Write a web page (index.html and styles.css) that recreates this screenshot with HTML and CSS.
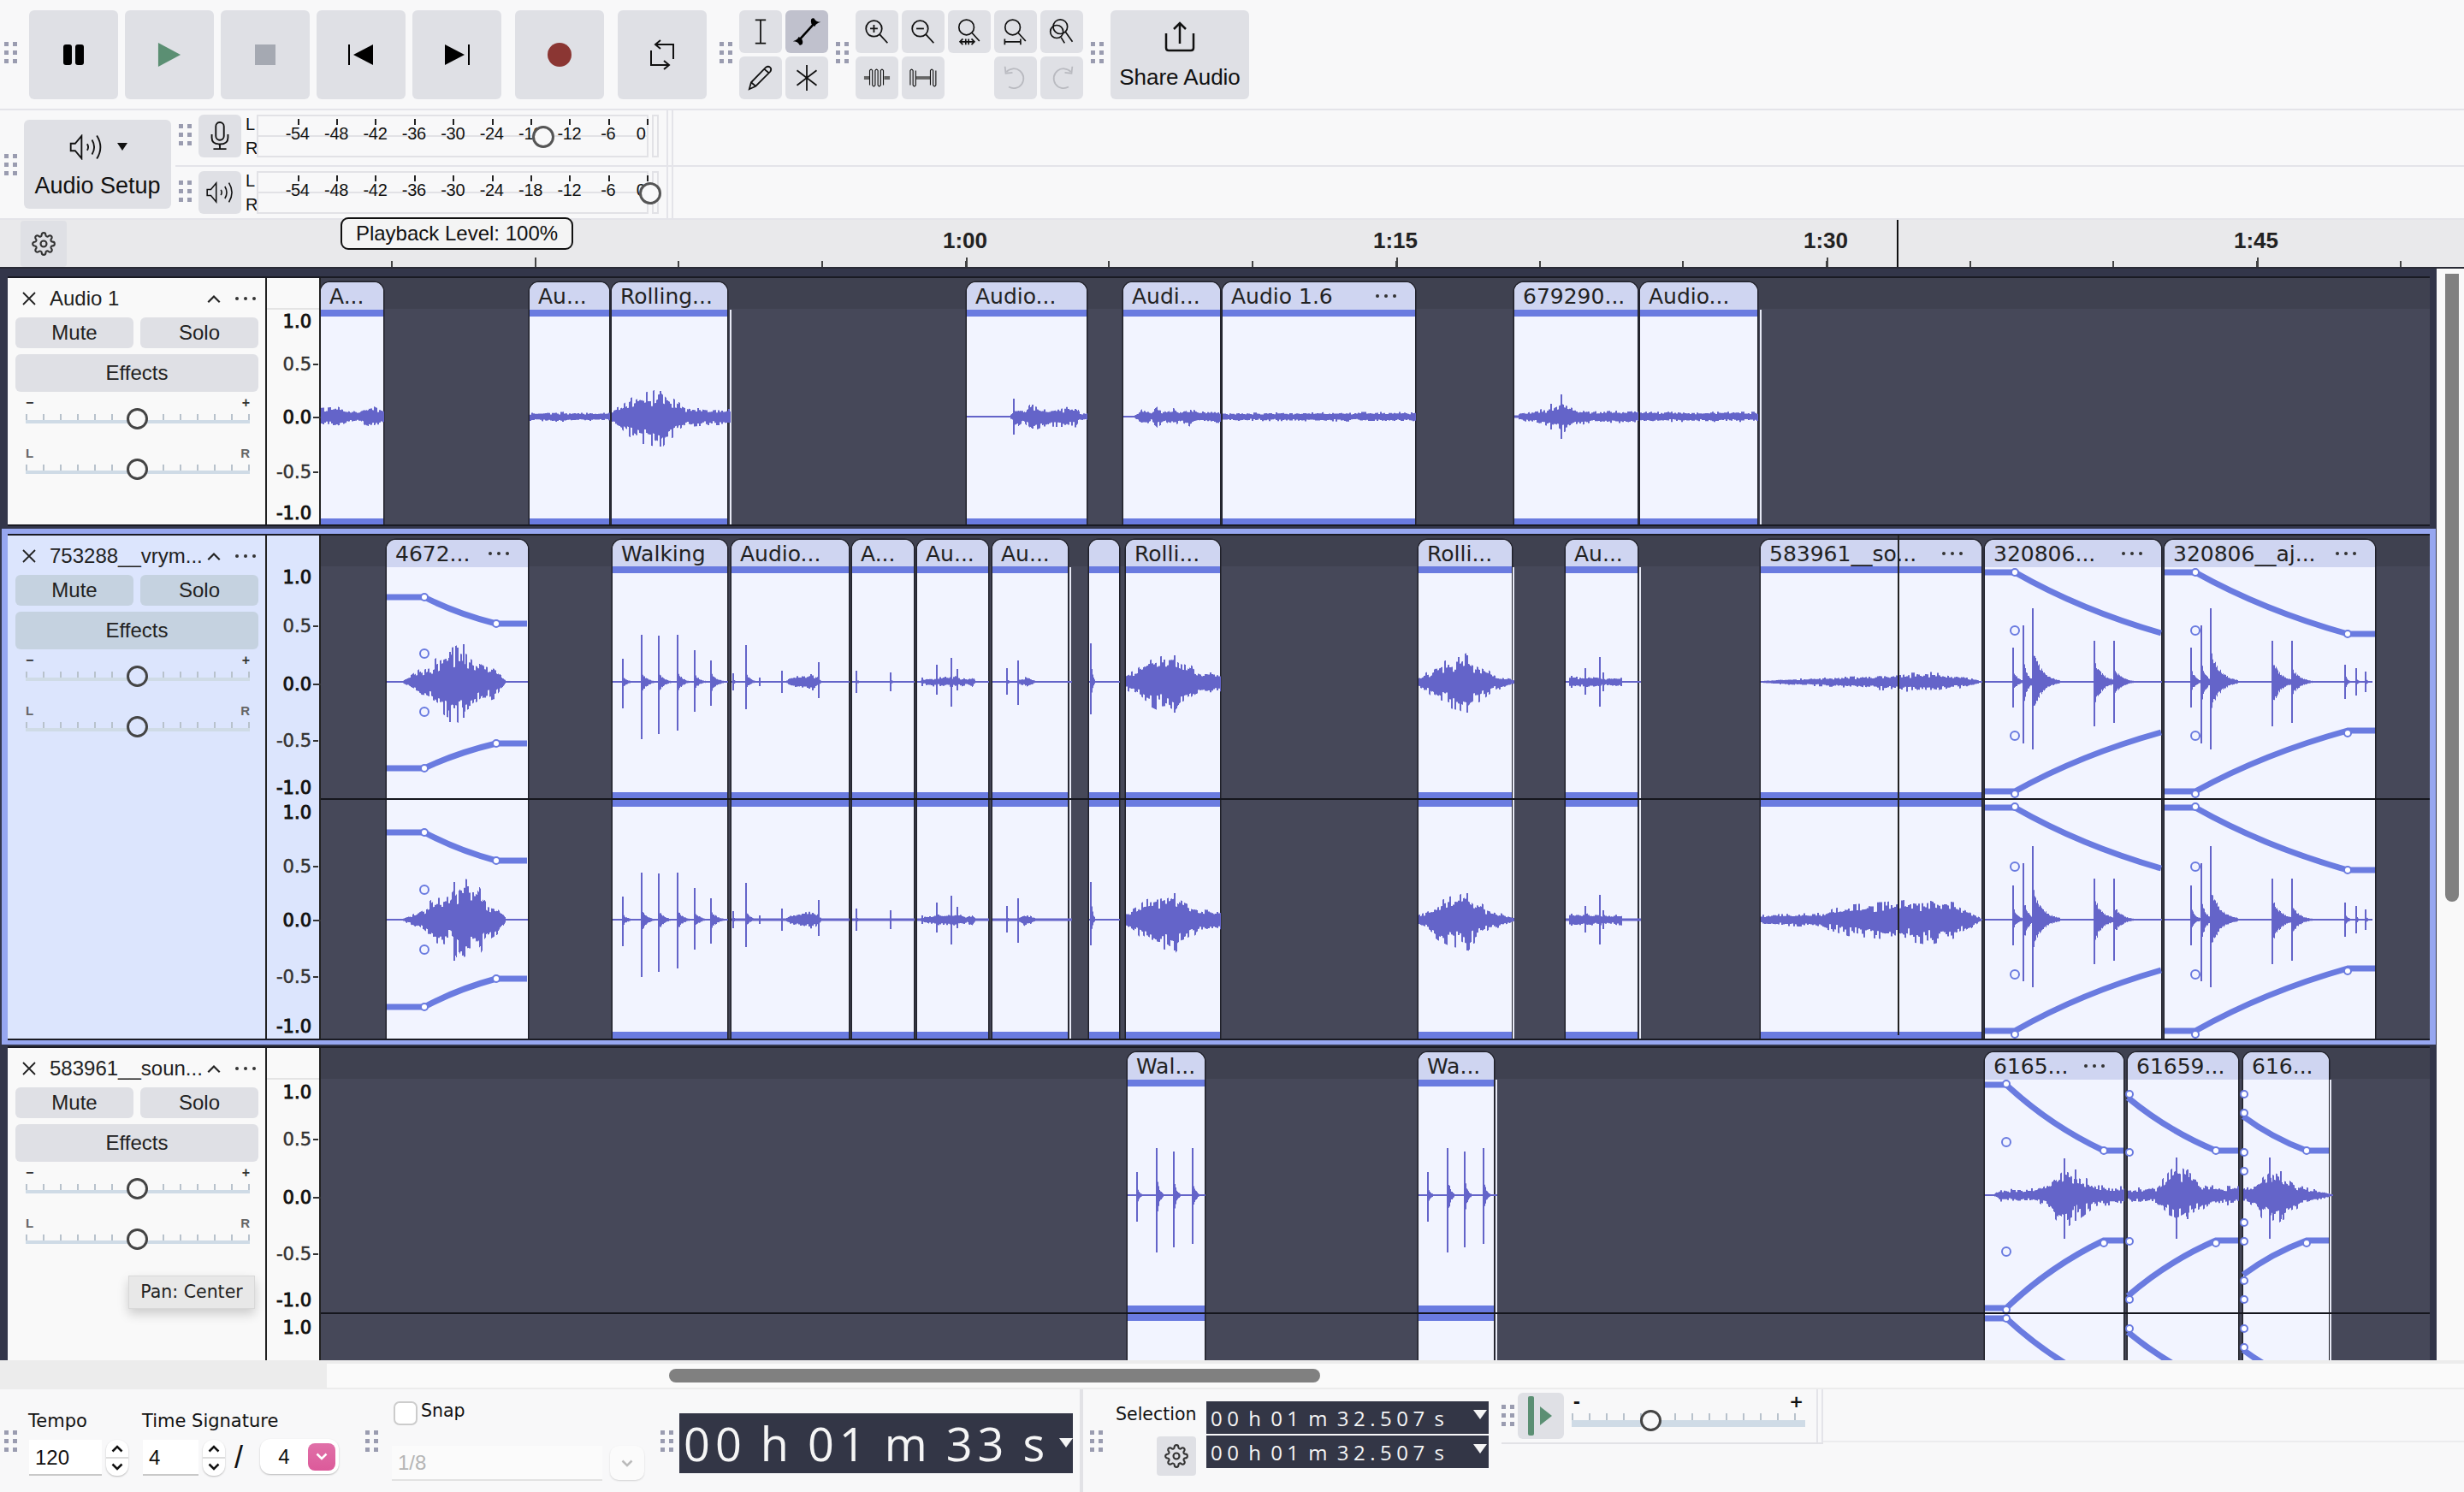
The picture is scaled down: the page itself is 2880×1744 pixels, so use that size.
FILE: index.html
```html
<!DOCTYPE html>
<html lang="en">
<head>
<meta charset="utf-8">
<title>Audacity</title>
<link rel="stylesheet" href="styles.css">
</head>
<body>
<svg class="defs" width="0" height="0">
  <symbol id="gear" viewBox="0 0 24 24"><circle cx="12" cy="12" r="3"/><path d="M19.4 15a1.65 1.65 0 0 0 .33 1.82l.06.06a2 2 0 0 1 0 2.83 2 2 0 0 1-2.83 0l-.06-.06a1.65 1.65 0 0 0-1.82-.33 1.65 1.65 0 0 0-1 1.51V21a2 2 0 0 1-2 2 2 2 0 0 1-2-2v-.09A1.65 1.65 0 0 0 9 19.4a1.65 1.65 0 0 0-1.82.33l-.06.06a2 2 0 0 1-2.83 0 2 2 0 0 1 0-2.83l.06-.06a1.65 1.65 0 0 0 .33-1.82 1.65 1.65 0 0 0-1.51-1H3a2 2 0 0 1-2-2 2 2 0 0 1 2-2h.09A1.65 1.65 0 0 0 4.6 9a1.65 1.65 0 0 0-.33-1.82l-.06-.06a2 2 0 0 1 0-2.83 2 2 0 0 1 2.83 0l.06.06a1.65 1.65 0 0 0 1.82.33H9a1.65 1.65 0 0 0 1-1.51V3a2 2 0 0 1 2-2 2 2 0 0 1 2 2v.09a1.65 1.65 0 0 0 1 1.51 1.65 1.65 0 0 0 1.82-.33l.06-.06a2 2 0 0 1 2.83 0 2 2 0 0 1 0 2.83l-.06.06a1.65 1.65 0 0 0-.33 1.82V9a1.65 1.65 0 0 0 1.51 1H21a2 2 0 0 1 2 2 2 2 0 0 1-2 2h-.09a1.65 1.65 0 0 0-1.51 1z"/></symbol>
  <symbol id="speaker" viewBox="0 0 41 32"><path d="M1.5 11.5H7L15 2v28l-8-9.5H1.5z"/><path d="M22 12q2.500 4 0 8M28 7q5.500 9 0 18M34 1.500q9 14.500 0 29"/></symbol>
  <symbol id="cross" viewBox="0 0 16 16"><path d="M1 1l14 14M15 1L1 15"/></symbol>
  <symbol id="chev-up" viewBox="0 0 14 9"><path d="M1.500 7.500L7 2l5.500 5.500"/></symbol>
  <symbol id="chev-down" viewBox="0 0 14 9"><path d="M1.500 1.500L7 7l5.500-5.500"/></symbol>
  <symbol id="lens" viewBox="0 0 34 34"><circle cx="13" cy="13" r="10.500"/><path d="M20.500 20.500L31 32"/></symbol>
</svg>

<header class="top-bar">
  <span class="grip grip-first"></span>
  <div class="transport">
    <button class="tbtn"><svg class="ic24" viewBox="0 0 24 24"><rect x="0" y="0" width="10" height="24" rx="3" fill="#000"/><rect x="14" y="0" width="10" height="24" rx="3" fill="#000"/></svg></button>
    <button class="tbtn"><svg class="ic30" viewBox="0 0 30 30"><path d="M1 0l28 15L1 30z" fill="#5b8f73"/></svg></button>
    <button class="tbtn"><span class="stop"></span></button>
    <button class="tbtn"><svg class="ic30" viewBox="0 0 30 24"><path d="M1 0v24" stroke="#000" stroke-width="2"/><path d="M29 0v24L6 12z" fill="#000"/></svg></button>
    <button class="tbtn"><svg class="ic30" viewBox="0 0 30 24"><path d="M29 0v24" stroke="#000" stroke-width="2"/><path d="M1 0v24l23-12z" fill="#000"/></svg></button>
    <button class="tbtn tbtn-gap"><span class="rec"></span></button>
    <button class="tbtn tbtn-gap"><svg class="ic-loop ic-line" viewBox="0 0 30 34"><path d="M28 22V5H8M13 0L7 5l6 5"/><path d="M2 12V29H22M17 24l6 5-6 5"/></svg></button>
  </div>
  <span class="grip grip-tools"></span>
  <div class="tools">
    <button class="sbtn"><svg class="ic-s ic-line" viewBox="0 0 20 34"><path d="M3 1.500h14M3 32.500h14M10 1.500v31"/></svg></button>
    <button class="sbtn sbtn-on"><svg class="ic-env" viewBox="0 0 42 42"><path d="M10 33L32 9" stroke="#000" stroke-width="3"/><path d="M2 34q7-2 8-6 7 3 5 10-2 2-4 1-2-5-9-5zM40 8q-7 2-8 6-7-3-5-10 2-2 4-1 2 5 9 5z" fill="#000"/></svg></button>
    <button class="sbtn"><svg class="ic-s ic-line" viewBox="0 0 34 34"><path d="M2 32l2.500-9L24 3q3-2 5.500 0t.5 5.500L10.500 28zM4.500 23l6 5M22 5.500l6 5"/></svg></button>
    <button class="sbtn"><svg class="ic-s ic-line" viewBox="0 0 32 34"><path d="M16 0v34M3 7l26 20M29 7L3 27"/></svg></button>
  </div>
  <span class="grip grip-zoom"></span>
  <div class="zooms">
    <button class="sbtn"><svg class="ic-z ic-line" viewBox="0 0 34 34"><use href="#lens"/><path d="M13 8v10M8 13h10"/></svg></button>
    <button class="sbtn"><svg class="ic-z ic-line" viewBox="0 0 34 34"><use href="#lens"/><path d="M8 13h10"/></svg></button>
    <button class="sbtn"><svg class="ic-z ic-line" viewBox="0 0 34 38"><use href="#lens" width="34" height="34"/><path d="M4 33h20M8 29l-4 4 4 4M20 29l4 4-4 4M12 29v8M16 29v8"/></svg></button>
    <button class="sbtn"><svg class="ic-z ic-line" viewBox="0 0 34 38"><use href="#lens" width="34" height="34"/><path d="M2 33h22M2 29v8M24 29v8"/></svg></button>
    <button class="sbtn"><svg class="ic-z ic-line" viewBox="0 0 36 36"><circle cx="16" cy="11" r="10"/><circle cx="11" cy="18" r="9"/><path d="M23 18l10 14M17 26l5 8"/></svg></button>
    <button class="sbtn"><svg class="ic-coil" viewBox="0 0 34 26"><path class="coil-bar" d="M1 13h7M26 13h7"/><path d="M8 22V4q1.700-3 3.400 0v18q1.700 3 3.400 0V4q1.700-3 3.400 0v18q1.700 3 3.400 0V4q1.700-3 3.400 0v18"/></svg></button>
    <button class="sbtn"><svg class="ic-coil" viewBox="0 0 34 26"><path class="coil-bar" d="M8 13h18"/><path d="M1 22V4q1.700-3 3.400 0v18q1.700 3 3.400 0V4M26 22V4q1.700-3 3.400 0v18q1.700 3 3.400 0V4"/></svg></button>
    <span class="sgap"></span>
    <button class="sbtn"><svg class="ic-z ic-dim" viewBox="0 0 34 36"><path d="M8 30A13 13 0 1 0 5 10M3 3l1 9 9-1" /></svg></button>
    <button class="sbtn"><svg class="ic-z ic-dim" viewBox="0 0 34 36"><path d="M26 30A13 13 0 1 1 29 10M31 3l-1 9-9-1"/></svg></button>
  </div>
  <span class="grip grip-share"></span>
  <button class="share">
    <svg class="share-ic ic-line" viewBox="0 0 36 36"><path d="M18 26V2M11 9l7-7 7 7M2 14v17q0 3 3 3h26q3 0 3-3V14"/></svg>
    <span>Share Audio</span>
  </button>
</header>

<section class="meters">
  <div class="setup-col">
    <span class="grip grip-setup"></span>
    <button class="setup">
      <span class="setup-top"><svg class="setup-sp ic-line"><use href="#speaker"/></svg><span class="arrow-dn"></span></span>
      <span>Audio Setup</span>
    </button>
  </div>
  <div class="meter-rows">
    <div class="meter-row">
      <span class="grip grip-meter"></span>
      <button class="mbtn"><svg class="mic ic-line" viewBox="0 0 26 36"><rect x="8" y="1" width="10" height="22" rx="5"/><path d="M3 16v4q0 8 10 8t10-8v-4M13 28v5M5 34h16" /></svg></button>
      <span class="lr"><span>L</span><span>R</span></span>
      <div class="meter">
        <span class="m">-54</span><span class="m">-48</span><span class="m">-42</span><span class="m">-36</span><span class="m">-30</span><span class="m">-24</span><span class="m">-18</span><span class="m">-12</span><span class="m">-6</span><span class="m m-last">0</span>
        <span class="knob knob-rec"></span>
      </div>
      <span class="mini"></span>
      <span class="mend"></span>
    </div>
    <div class="meter-row">
      <span class="grip grip-meter"></span>
      <button class="mbtn"><svg class="mbtn-sp ic-line"><use href="#speaker"/></svg></button>
      <span class="lr"><span>L</span><span>R</span></span>
      <div class="meter">
        <span class="m">-54</span><span class="m">-48</span><span class="m">-42</span><span class="m">-36</span><span class="m">-30</span><span class="m">-24</span><span class="m">-18</span><span class="m">-12</span><span class="m">-6</span><span class="m m-last">0</span>
        <span class="knob knob-play"></span>
      </div>
      <span class="mini"></span>
      <span class="mend"></span>
    </div>
  </div>
</section>

<section class="ruler">
  <button class="gear-btn"><svg class="gear"><use href="#gear"/></svg></button>
  <div class="ruler-scale">
    <span class="major" style="left:625px"></span>
    <span class="major" style="left:1129px"><b>1:00</b></span>
    <span class="major" style="left:1632px"><b>1:15</b></span>
    <span class="major" style="left:2135px"><b>1:30</b></span>
    <span class="major" style="left:2638px"><b>1:45</b></span>
    <span class="playhead"></span>
  </div>
</section>
<div class="tip-level">Playback Level: 100%</div>

<main class="work">
  <div class="tracks">
    <div class="track" data-track="1">
      <aside class="panel">
        <div class="p-head"><svg class="p-x"><use href="#cross"/></svg><span class="p-title">Audio 1</span><svg class="p-caret"><use href="#chev-up"/></svg><span class="dots p-dots"></span></div>
        <div class="p-row"><button class="pbtn">Mute</button><button class="pbtn">Solo</button></div>
        <button class="pbtn pfx">Effects</button>
        <div class="sl"><div class="sl-labels"><span>−</span><span>+</span></div><div class="sl-track"><span class="sl-thumb"></span></div></div>
        <div class="sl sl-pan"><div class="sl-labels"><span>L</span><span>R</span></div><div class="sl-track"><span class="sl-thumb"></span></div></div>
      </aside>
      <div class="vruler">
        <span class="v vb" style="top:50px">1.0</span><span class="v vt" style="top:100px">0.5</span><span class="v vb vt vt0" style="top:162px">0.0</span><span class="v vt" style="top:226px">-0.5</span><span class="v vb" style="top:274px">-1.0</span>
      </div>
      <div class="canvas">
        <div class="clip" style="left:0;width:73px"><div class="clip-head"><span>A...</span></div></div>
        <div class="clip" style="left:244px;width:93px"><div class="clip-head"><span>Au...</span></div></div>
        <div class="clip" style="left:340px;width:135px"><div class="clip-head"><span>Rolling...</span></div></div>
        <span class="trail" style="left:478px"></span>
        <div class="clip" style="left:755px;width:140px"><div class="clip-head"><span>Audio...</span></div></div>
        <div class="clip" style="left:938px;width:113px"><div class="clip-head"><span>Audi...</span></div></div>
        <div class="clip" style="left:1054px;width:225px"><div class="clip-head"><span>Audio 1.6</span><i class="dots"></i></div></div>
        <div class="clip" style="left:1395px;width:144px"><div class="clip-head"><span>679290...</span></div></div>
        <div class="clip" style="left:1542px;width:137px"><div class="clip-head"><span>Audio...</span></div></div>
        <span class="trail" style="left:1682px"></span>
        <svg class="waves"></svg>
      </div>
    </div>

    <div class="track-sel">
      <div class="track track-tall" data-track="2">
        <aside class="panel">
          <div class="p-head"><svg class="p-x"><use href="#cross"/></svg><span class="p-title">753288__vrym...</span><svg class="p-caret"><use href="#chev-up"/></svg><span class="dots p-dots"></span></div>
          <div class="p-row"><button class="pbtn">Mute</button><button class="pbtn">Solo</button></div>
          <button class="pbtn pfx">Effects</button>
          <div class="sl"><div class="sl-labels"><span>−</span><span>+</span></div><div class="sl-track"><span class="sl-thumb"></span></div></div>
          <div class="sl sl-pan"><div class="sl-labels"><span>L</span><span>R</span></div><div class="sl-track"><span class="sl-thumb"></span></div></div>
        </aside>
        <div class="vruler">
          <span class="v vb" style="top:48px">1.0</span><span class="v vt" style="top:105px">0.5</span><span class="v vb vt vt0" style="top:173px">0.0</span><span class="v vt" style="top:239px">-0.5</span><span class="v vb" style="top:294px">-1.0</span>
          <span class="v vb" style="top:323px">1.0</span><span class="v vt" style="top:386px">0.5</span><span class="v vb vt vt0" style="top:449px">0.0</span><span class="v vt" style="top:515px">-0.5</span><span class="v vb" style="top:573px">-1.0</span>
        </div>
        <div class="canvas">
          <div class="clip" style="left:77px;width:165px"><div class="clip-head"><span>4672...</span><i class="dots"></i></div></div>
          <div class="clip" style="left:341px;width:134px"><div class="clip-head"><span>Walking</span></div></div>
          <div class="clip" style="left:480px;width:137px"><div class="clip-head"><span>Audio...</span></div></div>
          <div class="clip" style="left:621px;width:72px"><div class="clip-head"><span>A...</span></div></div>
          <div class="clip" style="left:697px;width:83px"><div class="clip-head"><span>Au...</span></div></div>
          <div class="clip" style="left:785px;width:88px"><div class="clip-head"><span>Au...</span></div></div>
          <span class="trail" style="left:875px"></span>
          <div class="clip" style="left:898px;width:35px"><div class="clip-head"></div></div>
          <div class="clip" style="left:941px;width:110px"><div class="clip-head"><span>Rolli...</span></div></div>
          <div class="clip" style="left:1283px;width:109px"><div class="clip-head"><span>Rolli...</span></div></div>
          <span class="trail" style="left:1393px"></span>
          <div class="clip" style="left:1455px;width:84px"><div class="clip-head"><span>Au...</span></div></div>
          <span class="trail" style="left:1541px"></span>
          <div class="clip" style="left:1683px;width:258px"><div class="clip-head"><span>583961__so...</span><i class="dots"></i></div></div>
          <div class="clip" style="left:1945px;width:206px"><div class="clip-head"><span>320806...</span><i class="dots"></i></div></div>
          <div class="clip" style="left:2155px;width:246px"><div class="clip-head"><span>320806__aj...</span><i class="dots"></i></div></div>
          <svg class="waves"></svg>
          <span class="split" style="top:307px"></span>
          <span class="clip-cursor" style="left:1843px"></span>
        </div>
      </div>
    </div>

    <div class="track track-last" data-track="3">
      <aside class="panel">
        <div class="p-head"><svg class="p-x"><use href="#cross"/></svg><span class="p-title">583961__soun...</span><svg class="p-caret"><use href="#chev-up"/></svg><span class="dots p-dots"></span></div>
        <div class="p-row"><button class="pbtn">Mute</button><button class="pbtn">Solo</button></div>
        <button class="pbtn pfx">Effects</button>
        <div class="sl"><div class="sl-labels"><span>−</span><span>+</span></div><div class="sl-track"><span class="sl-thumb"></span></div></div>
        <div class="sl sl-pan"><div class="sl-labels"><span>L</span><span>R</span></div><div class="sl-track"><span class="sl-thumb"></span></div></div>
        <div class="tip-pan">Pan: Center</div>
      </aside>
      <div class="vruler">
        <span class="v vb" style="top:51px">1.0</span><span class="v vt" style="top:106px">0.5</span><span class="v vb vt vt0" style="top:174px">0.0</span><span class="v vt" style="top:240px">-0.5</span><span class="v vb" style="top:294px">-1.0</span><span class="v vb" style="top:326px">1.0</span>
      </div>
      <div class="canvas">
        <div class="clip" style="left:943px;width:90px"><div class="clip-head"><span>Wal...</span></div></div>
        <div class="clip" style="left:1283px;width:88px"><div class="clip-head"><span>Wa...</span></div></div>
        <span class="trail" style="left:1373px"></span>
        <div class="clip" style="left:1945px;width:162px"><div class="clip-head"><span>6165...</span><i class="dots"></i></div></div>
        <div class="clip" style="left:2112px;width:129px"><div class="clip-head"><span>61659...</span></div></div>
        <div class="clip" style="left:2247px;width:100px"><div class="clip-head"><span>616...</span></div></div>
        <span class="trail" style="left:2348px"></span>
        <svg class="waves"></svg>
        <span class="split" style="top:309px"></span>
      </div>
    </div>
  </div>
  <div class="vscroll"><span class="vthumb"></span></div>
</main>

<div class="hscroll"><span class="hleft"></span><span class="hthumb"></span></div>

<footer class="bottom">
  <section class="b-sec b-tempo">
    <span class="grip grip-b"></span>
    <div class="b-col b-col-tempo">
      <label class="b-label">Tempo</label>
      <div class="b-ctl"><span class="num num-w1">120</span><span class="spin"><svg class="chev"><use href="#chev-up"/></svg><svg class="chev"><use href="#chev-down"/></svg></span></div>
    </div>
    <div class="b-col">
      <label class="b-label">Time Signature</label>
      <div class="b-ctl"><span class="num num-w2">4</span><span class="spin"><svg class="chev"><use href="#chev-up"/></svg><svg class="chev"><use href="#chev-down"/></svg></span><span class="slash">/</span>
        <span class="sel"><span class="sel-v">4</span><span class="sel-btn"><svg class="chev chev-w"><use href="#chev-down"/></svg></span></span></div>
    </div>
  </section>
  <section class="b-sec b-snap">
    <span class="grip grip-b"></span>
    <div class="snap-col">
      <div class="snap-row"><span class="check"></span><span class="snap-text">Snap</span></div>
      <div class="snap-ctl"><span class="grid-sel">1/8</span><span class="grid-btn"><svg class="chev chev-g"><use href="#chev-down"/></svg></span></div>
    </div>
  </section>
  <section class="b-sec b-clock">
    <span class="grip grip-b"></span>
    <div class="clock"><span>00 h 01 m 33 s</span><i class="clock-arrow"></i></div>
  </section>
  <section class="b-sec b-selection">
    <span class="grip grip-b"></span>
    <div class="sel-left">
      <span class="snap-text sel-label">Selection</span>
      <button class="gear-btn2"><svg class="gear"><use href="#gear"/></svg></button>
    </div>
    <div class="sel-times">
      <div class="tbox"><span>00 h 01 m 32.507 s</span><i class="tbox-arrow"></i></div>
      <div class="tbox"><span>00 h 01 m 32.507 s</span><i class="tbox-arrow"></i></div>
    </div>
  </section>
  <section class="b-sec b-speed">
    <span class="grip grip-sp"></span>
    <button class="speed-btn"><svg class="speed-ic" viewBox="0 0 30 46"><rect x="0" y="0" width="7" height="46" rx="2" fill="#5b8f73"/><path d="M14 12l14 11-14 11z" fill="#5b8f73"/></svg></button>
    <div class="speed-sl">
      <div class="sl-labels"><span>-</span><span>+</span></div>
      <div class="sl-track sl-track-w"><span class="sl-thumb sl-thumb-sp"></span></div>
    </div>
    <span class="mend mend-b"></span>
  </section>
  <section class="b-sec b-rest"></section>
</footer>
<script src="waves.js"></script>
</body>
</html>
```
FILE: styles.css
```css
* { box-sizing: border-box; }
html, body { margin: 0; padding: 0; }
body { width: 2880px; height: 1744px; overflow: hidden; position: relative; background: #f8f8f9; color: #111; font-family: "Liberation Sans", Arial, sans-serif; display: flex; flex-direction: column; }
button { border: 0; padding: 0; margin: 0; font: inherit; color: inherit; display: flex; align-items: center; justify-content: center; }
.defs { position: absolute; }
svg { display: block; overflow: visible; }

.grip { flex: none; display: block; width: 15px; height: 25px; background-repeat: no-repeat; background-size: 5px 5px; background-position: 0 0, 10px 0, 0 10px, 10px 10px, 0 20px, 10px 20px; background-image: linear-gradient(#9a9cb0,#9a9cb0), linear-gradient(#9a9cb0,#9a9cb0), linear-gradient(#9a9cb0,#9a9cb0), linear-gradient(#9a9cb0,#9a9cb0), linear-gradient(#9a9cb0,#9a9cb0), linear-gradient(#9a9cb0,#9a9cb0); }

.ic-line { fill: none; stroke: #111; stroke-width: 2; }
.ic-dim { fill: none; stroke: #b9bac0; stroke-width: 2; }

/* top toolbar */
.top-bar { flex: none; height: 129px; border-bottom: 2px solid #e4e4e9; padding: 12px 0 0 5px; display: flex; align-items: flex-start; }
.grip-first { margin: 37px 14px 0 0; }
.transport { display: flex; gap: 8px; }
.tbtn { width: 104px; height: 104px; background: #dfe0e5; border-radius: 6px; }
.tbtn-gap { margin-left: 8px; }
.ic24 { width: 24px; height: 24px; }
.ic30 { width: 30px; height: 28px; }
.ic-loop { width: 30px; height: 34px; }
.stop { width: 24px; height: 24px; background: #a5a9b2; }
.rec { width: 28px; height: 28px; border-radius: 50%; background: #8b3633; }
.grip-tools { margin: 37px 8px 0 15px; }
.tools { display: grid; grid-template-columns: 50px 50px; gap: 4px; }
.sbtn { width: 50px; height: 50px; background: #dfe0e5; border-radius: 6px; }
.sbtn-on { background: #c0c1cd; }
.ic-s { width: 30px; height: 30px; }
.ic-env { width: 36px; height: 36px; }
.ic-z { width: 30px; height: 32px; }
.ic-coil { width: 32px; height: 26px; fill: none; stroke: #111; stroke-width: 1.200; }
.coil-bar { stroke-width: 4; stroke: #666; }
.grip-zoom { margin: 37px 8px 0 9px; }
.zooms { display: grid; grid-template-columns: repeat(5, 50px); gap: 4px; }
.sgap { display: block; }
.grip-share { margin: 37px 8px 0 9px; }
.share { width: 162px; height: 104px; background: #dfe0e5; border-radius: 6px; flex-direction: column; font-size: 26px; gap: 14px; padding-top: 2px; }
.share-ic { width: 36px; height: 36px; stroke-width: 2.500; }

/* meters */
.meters { flex: none; height: 128px; display: flex; border-bottom: 2px solid #e4e4e9; }
.setup-col { flex: none; width: 205px; padding: 11px 0 0 5px; display: flex; align-items: center; }
.grip-setup { margin: 0 8px 10px 0; }
.setup { width: 172px; height: 104px; background: #dfe0e5; border-radius: 6px; flex-direction: column; font-size: 27px; gap: 15px; padding-top: 5px; margin-bottom: 11px; }
.setup-top { display: flex; align-items: center; gap: 16px; }
.setup-sp { width: 41px; height: 30px; }
.arrow-dn { width: 0; height: 0; border: 6px solid transparent; border-top: 9px solid #111; border-bottom: 0; }
.meter-rows { flex: 1; display: flex; flex-direction: column; }
.meter-row { flex: 1; display: flex; align-items: flex-start; padding: 5px 0 0 4px; border-bottom: 2px solid #e4e4e9; }
.meter-row:last-child { border-bottom: 0; }
.grip-meter { margin: 11px 8px 0 0; }
.mbtn { width: 50px; height: 50px; background: #dfe0e5; border-radius: 6px; }
.mic { width: 26px; height: 34px; }
.mbtn-sp { width: 32px; height: 26px; }
.lr { width: 13px; margin-left: 5px; display: flex; flex-direction: column; justify-content: space-between; height: 50px; font-size: 20px; line-height: 22px; }
.meter { position: relative; width: 458px; height: 50px; border: 2px solid #e2e2e6; display: flex; padding-left: 23px; background: linear-gradient(#e2e2e6, #e2e2e6) 0 22px / 100% 2px no-repeat; }
.m { flex: none; width: 45.4px; text-align: center; font-size: 20px; line-height: 24px; letter-spacing: -.3px; padding-top: 8px; position: relative; }
.m::before { content: ""; position: absolute; left: 50%; top: 3px; width: 2px; height: 7px; background: #222; }
.m-last { padding-right: 14px; }
.knob { position: absolute; width: 26px; height: 26px; border-radius: 50%; border: 3px solid #555; background: #f8f8f9; top: 11px; }
.knob-rec { left: 320px; }
.knob-play { left: 445px; }
.mini { width: 8px; height: 50px; margin-left: 4px; border: 2px solid #e2e2e6; }
.mend { width: 8px; height: 64px; margin: -5px 0 0 9px; border-left: 2px solid #e4e4e9; border-right: 2px solid #e4e4e9; }

/* ruler */
.ruler { flex: none; height: 57px; background: #e9e9eb; position: relative; border-bottom: 2px solid #2a2b36; }
.gear-btn { position: absolute; left: 24px; top: 1px; width: 54px; height: 54px; background: #dfe0e5; border-radius: 4px; }
.gear { width: 28px; height: 28px; fill: none; stroke: #333; stroke-width: 1.800; }
.ruler-scale { position: absolute; inset: 0; }
.ruler-scale::after { content: ""; position: absolute; left: 457px; right: 0; bottom: 0; height: 7px; background: repeating-linear-gradient(90deg, #444 0 2px, transparent 2px 167.7px); }
.major { position: absolute; bottom: 0; width: 2px; height: 11px; background: #444; }
.major b { position: absolute; left: -1px; bottom: 16px; transform: translateX(-50%); font-size: 26px; line-height: 30px; color: #222; }
.playhead { position: absolute; left: 2217px; top: 0; bottom: 0; width: 2px; background: #111; }
.tip-level { position: absolute; left: 398px; top: 254px; width: 272px; height: 38px; border: 2px solid #111; border-radius: 9px; background: #f4f4f4; font-size: 24px; line-height: 34px; text-align: center; z-index: 5; }

/* tracks */
.work { flex: none; height: 1276px; display: flex; }
.tracks { flex: none; width: 2848px; height: 1276px; overflow: hidden; background: #33364a; padding-top: 11px; }
.track { width: 2831px; margin-left: 9px; height: 288px; display: flex; position: relative; box-shadow: 0 -2px 0 #1a1b24, 0 2px 0 #1a1b24; }
.track-sel { width: 2845px; height: 603px; margin: 5px 0 0 2px; border: solid #97a7f0; border-width: 6px 7px 7px; padding-top: 2px; background: #1a1b24; }
.track-tall { margin-left: 0; height: 588px; }
.track-tall .panel, .track-tall .vruler { background: #dce5fd; }
.track-tall .pbtn { background: #c5d2e0; }
.track-tall .sl-thumb { background: #dce5fd; }
.track-last { height: 400px; margin-top: 4px; }
.panel { flex: none; width: 303px; background: #f9f9f9; border-right: 2px solid #222; position: relative; }
.p-head { height: 46px; display: flex; align-items: center; padding: 2px 0 0 17px; font-size: 24px; }
.p-x { width: 16px; height: 16px; fill: none; stroke: #222; stroke-width: 1.800; flex: none; }
.p-title { width: 183px; margin-left: 16px; white-space: nowrap; overflow: hidden; color: #222; }
.p-caret { width: 18px; height: 11px; fill: none; stroke: #222; stroke-width: 1.800; flex: none; }
.dots { display: block; width: 4px; height: 4px; border-radius: 50%; background: #333; box-shadow: -10px 0 #333, 10px 0 #333; }
.p-dots { margin-left: 26px; }
.p-row { display: flex; gap: 8px; margin-left: 9px; }
.pbtn { width: 138px; height: 36px; background: #dfe0e5; border-radius: 6px; font-size: 24px; color: #222; }
.pfx { width: 284px; height: 44px; margin: 7px 0 0 9px; }
.sl { margin: 3px 0 0 21px; width: 262px; height: 60px; }
.sl-labels { display: flex; justify-content: space-between; height: 20px; font-size: 16px; line-height: 20px; font-weight: bold; color: #333; }
.sl-pan { margin-top: 5px; }
.sl-pan .sl-labels { margin: -6px 0 6px; color: #666; font-size: 15px; }
.sl-track { position: relative; height: 4px; margin-top: 10px; background: #cfdbe6; }
.sl-track::before { content: ""; position: absolute; left: 0; right: 0; bottom: 4px; height: 7px; background: repeating-linear-gradient(90deg, #b8c2cc 0 2px, transparent 2px 20px); }
.sl-thumb { position: absolute; left: 118px; top: -14px; width: 25px; height: 25px; border-radius: 50%; border: 3px solid #444; background: #f9f9f9; }
.vruler { flex: none; width: 63px; background: #f9f9f9; border-right: 2px solid #222; position: relative; background-image: linear-gradient(#e4e4e4, #e4e4e4); background-repeat: no-repeat; background-size: 100% 2px; background-position: 0 35px; }
.v { position: absolute; right: 9px; margin-top: 1px; transform: translateY(-50%); font-family: "DejaVu Sans", sans-serif; font-size: 21px; line-height: 24px; color: #333; -webkit-text-stroke: .5px #333; }
.vb { color: #111; -webkit-text-stroke: .9px #111; }
.vt::after { content: ""; position: absolute; left: 100%; top: 11px; margin-left: 2px; width: 6px; height: 2px; background: #333; }
.vt0::after { width: 9px; }
.canvas { flex: 1; position: relative; overflow: hidden; background: linear-gradient(#3f4150 36px, #464859 36px); }
.clip { position: absolute; top: 5px; bottom: 0; background: #f2f4ff; border-radius: 11px 11px 0 0; box-shadow: 0 0 0 1.500px #20212a; }
.clip-head { height: 32px; background: #cfd5f1; border-radius: 11px 11px 0 0; display: flex; align-items: center; justify-content: space-between; padding: 0 0 0 10px; overflow: hidden; font-family: "DejaVu Sans", sans-serif; font-size: 25px; color: #222; white-space: nowrap; }
.clip-head .dots { margin-right: 32px; flex: none; }
.trail { position: absolute; top: 37px; bottom: 0; width: 2px; background: #e7e9f5; }
.waves { position: absolute; left: 0; top: 0; pointer-events: none; overflow: hidden; }
.split { position: absolute; left: 0; right: 0; height: 2px; background: #15161d; }
.clip-cursor { position: absolute; top: 0; bottom: 4px; width: 2px; background: #222; }
.tip-pan { position: absolute; left: 141px; top: 266px; width: 148px; height: 39px; background: #e8e8e8; border: 1px solid #d8d8d8; font-family: "DejaVu Sans", sans-serif; font-size: 20.500px; line-height: 37px; text-align: center; box-shadow: 0 6px 12px rgba(0,0,0,.18); z-index: 3; color: #222; }
.vscroll { flex: 1; background: #f9f9f9; position: relative; }
.vthumb { position: absolute; left: 10px; top: 6px; width: 16px; height: 734px; border-radius: 0 0 8px 8px; background: #808080; }

/* horizontal scrollbar */
.hscroll { flex: none; height: 32px; background: #fafafa; position: relative; border-top: 4px solid #ececec; }
.hleft { position: absolute; left: 0; top: 0; bottom: 0; width: 382px; background: #ececec; }
.hthumb { position: absolute; left: 782px; top: 6px; width: 761px; height: 16px; border-radius: 8px; background: #808080; }

/* bottom toolbar */
.bottom { flex: 1; display: flex; border-top: 2px solid #ececec; background: #f8f8f9; font-family: "DejaVu Sans", sans-serif; }
.b-sec { flex: none; display: flex; align-items: flex-start; position: relative; }
.grip-b { margin-top: 48px; }
.b-tempo { width: 427px; padding-left: 5px; }
.b-col { display: flex; flex-direction: column; padding-top: 24px; margin-left: 13px; }
.b-col + .b-col { margin-left: 0; }
.b-col-tempo { width: 133px; }
.b-label { font-size: 21px; line-height: 24px; height: 35px; color: #111; position: relative; top: 1px; }
.b-ctl { display: flex; align-items: center; font-family: "Liberation Sans", sans-serif; font-size: 24px; margin-left: 1px; }
.num { height: 42px; background: #fff; border-bottom: 2px solid #c9c9c9; padding-left: 7px; line-height: 42px; display: block; }
.num-w1 { width: 85px; }
.num-w2 { width: 65px; }
.spin { width: 26px; height: 42px; margin-left: 5px; background: #fff; border-radius: 12px; box-shadow: 0 1px 2px rgba(0,0,0,.25); display: flex; flex-direction: column; align-items: center; justify-content: space-around; background-image: linear-gradient(#ddd, #ddd); background-size: 100% 2px; background-position: 0 50%; background-repeat: no-repeat; }
.chev { width: 14px; height: 9px; fill: none; stroke: #111; stroke-width: 2.500; }
.chev-w { stroke: #fff; }
.chev-g { stroke: #bbb; }
.slash { font-size: 36px; margin: 0 17px 0 11px; width: 13px; }
.sel { width: 92px; height: 41px; margin-top: -3px; background: #fff; border-radius: 12px; box-shadow: 0 1px 2px rgba(0,0,0,.25); display: flex; align-items: center; }
.sel-v { width: 56px; text-align: center; }
.sel-btn { width: 32px; height: 32px; border-radius: 8px; background: linear-gradient(#e070a8, #dc5a9a); display: flex; align-items: center; justify-content: center; }
.b-snap { width: 345px; }
.snap-col { margin-left: 16px; padding-top: 14px; }
.snap-row { display: flex; gap: 4px; margin-left: 2px; height: 52px; }
.check { width: 28px; height: 28px; border: 2px solid #ccc; border-radius: 7px; background: #fff; }
.snap-text { font-size: 20.500px; line-height: 24px; margin-top: -1px; }
.snap-ctl { display: flex; gap: 9px; }
.grid-sel { width: 246px; height: 41px; background: #fbfbfb; border-bottom: 2px solid #e2e2e2; padding-left: 7px; line-height: 40px; color: #b5b5b5; font-family: "Liberation Sans", sans-serif; font-size: 24px; }
.grid-btn { width: 40px; height: 40px; background: #fbfbfb; border-radius: 10px; box-shadow: 0 1px 2px rgba(0,0,0,.15); display: flex; align-items: center; justify-content: center; }
.b-clock { width: 492px; border-right: 2px solid #e2e2e6; }
.clock { position: relative; margin: 28px 0 0 7px; width: 460px; height: 70px; background: #333646; color: #f5f5f5; font-family: "Open Sans", sans-serif; font-size: 54px; letter-spacing: 6px; word-spacing: -4px; line-height: 70px; padding-left: 5px; white-space: nowrap; }
.clock-arrow { position: absolute; right: 0; top: 29px; border: 8px solid transparent; border-top: 11px solid #f5f5f5; border-bottom: 0; }
.b-selection { width: 491px; padding-left: 8px; border-left: 2px solid #e2e2e6; }
.sel-left { width: 109px; display: flex; flex-direction: column; align-items: flex-end; padding-top: 17px; }
.sel-label { margin: 0; width: 94px; }
.gear-btn2 { width: 46px; height: 46px; margin-top: 14px; background: #dfe0e5; border-radius: 4px; }
.sel-times { margin-left: 12px; padding-top: 14px; display: flex; flex-direction: column; gap: 2px; }
.tbox { position: relative; width: 330px; height: 38px; background: #333646; color: #f5f5f5; font-family: "Open Sans", sans-serif; font-size: 24px; letter-spacing: 5.500px; word-spacing: -6px; line-height: 40px; padding-left: 5px; white-space: nowrap; }
.tbox-arrow { position: absolute; right: 2px; top: 10px; border: 8px solid transparent; border-top: 11px solid #f5f5f5; border-bottom: 0; }
.b-speed { width: 376px; height: 64px; padding: 4px 0 0 0; border-bottom: 2px solid #e2e2e6; }
.b-rest { flex: 1; height: 62px; border-bottom: 2px solid #ececee; }
.grip-sp { margin-top: 14px; }
.speed-btn { width: 54px; height: 54px; margin-left: 4px; background: #dfe0e5; border-radius: 6px; }
.speed-ic { width: 30px; height: 46px; }
.speed-sl { width: 275px; margin-left: 9px; }
.speed-sl .sl-labels { height: 22px; font-size: 20px; color: #111; padding: 0 2px; }
.sl-track-w { height: 8px; margin-top: 10px; }
.sl-thumb-sp { left: 80px; top: -12px; background: #f8f8f9; }
.speed-sl .sl-track::before { bottom: 8px; height: 8px; }
.mend-b { height: 62px; margin: -4px 0 0 13px; }
```
FILE: waves.js
```js
(function () {
  var NS = 'http://www.w3.org/2000/svg';
  var WAVE = '#6464c9', BAND = '#6a7be0';
  var CANVAS_X = 375;

  function rng(seed) {
    var s = seed;
    return function () { s = (s * 16807) % 2147483647; return s / 2147483647; };
  }
  function el(svg, name, attrs) {
    var e = document.createElementNS(NS, name);
    for (var k in attrs) e.setAttribute(k, attrs[k]);
    svg.appendChild(e);
    return e;
  }
  function interp(pts, x) {
    if (!pts || !pts.length || x < pts[0][0] || x > pts[pts.length - 1][0]) return 0;
    for (var i = 1; i < pts.length; i++) {
      if (x <= pts[i][0]) {
        var a = pts[i - 1], b = pts[i];
        return a[1] + (b[1] - a[1]) * (x - a[0]) / ((b[0] - a[0]) || 1);
      }
    }
    return 0;
  }
  /* jagged multiplier: mostly below the envelope, a few teeth reach or pass it */
  function tooth(r) {
    var v = r();
    if (v < 0.12) return 1.18;
    if (v < 0.3) return 0.42 + 0.2 * r();
    return 0.62 + 0.36 * r();
  }
  function wave(svg, c, x0, x1, o, seed) {
    var r = rng(seed * 7919 + 13), top = [], bot = [], base = o.b === undefined ? 1 : o.b, dn = o.dn || 1.1;
    var tu = 1, td = 1;
    for (var x = x0; x <= x1; x++) {
      var e = interp(o.e, x);
      if ((x - x0) % 2 === 0) { tu = tooth(r); td = tooth(r); }
      var u = base + e * tu;
      var d = base + e * dn * td;
      (o.s || []).forEach(function (s) {
        var dx = x - s[0], stub = s[3] === undefined ? 0.3 : s[3], len = s[4] === undefined ? 7 : s[4];
        if (dx >= 0 && dx < 2) { u = Math.max(u, s[1]); d = Math.max(d, s[2]); }
        if (dx >= 0 && dx < len * 3) {
          var f = stub * Math.exp(-dx / len) * (0.7 + 0.3 * r());
          u = Math.max(u, s[1] * f); d = Math.max(d, s[2] * f);
        }
      });
      top.push(x + ',' + (c - u).toFixed(1), (x + 1) + ',' + (c - u).toFixed(1));
      bot.unshift((x + 1) + ',' + (c + d).toFixed(1), x + ',' + (c + d).toFixed(1));
    }
    el(svg, 'polygon', { points: top.concat(bot).join(' '), fill: WAVE });
  }
  function band(svg, x0, x1, y0, y1) {
    el(svg, 'rect', { x: x0, y: y0, width: x1 - x0, height: y1 - y0, fill: BAND });
  }
  function shift(pts, dx) { return pts.map(function (p) { return [p[0] + dx, p[1]]; }); }
  function shiftS(list, dx, k) {
    k = k || 1;
    return list.map(function (s) { return [s[0] + dx, s[1] * k, s[2] * k, s[3], s[4]]; });
  }
  function curve(x0, x1, xa, xb, ya, yb) {
    var cx = xa + (xb - xa) * 0.45, cy = ya + (yb - ya) * 0.62;
    return 'M' + x0 + ' ' + ya + 'L' + xa + ' ' + ya + 'Q' + cx + ' ' + cy + ' ' + xb + ' ' + yb + 'L' + x1 + ' ' + yb;
  }
  function fade(svg, x0, x1, xa, xb, t1, t2, b1, b2) {
    el(svg, 'path', { d: curve(x0, x1, xa, xb, t1, t2), fill: 'none', stroke: BAND, 'stroke-width': 7 });
    if (b1 !== null) el(svg, 'path', { d: curve(x0, x1, xa, xb, b1, b2), fill: 'none', stroke: BAND, 'stroke-width': 7 });
  }
  function dot(svg, x, y, on) {
    el(svg, 'circle', { cx: x, cy: y, r: on ? 4 : 5, fill: on ? '#fff' : '#f2f4ff', stroke: BAND, 'stroke-width': 2 });
  }

  /* shape of the "rolling" sound, relative to its peak */
  var ROLL = [[-56, 5], [-44, 10], [-34, 17], [-20, 22], [-8, 24], [0, 28], [8, 20], [18, 15], [30, 8], [40, 7], [56, 6]];
  var WALK = [[727, 27, 31, .3, 5], [749, 55, 67, .25, 6], [769, 54, 61, .25, 6], [791, 55, 57, .25, 6], [811, 37, 35, .3, 6], [830, 25, 28, .5, 7]];
  var STEPS = [[2352, 40, 30, .5, 5], [2364, 66, 72, .5, 5], [2375, 86, 79, .5, 11], [2447, 48, 52, .6, 10], [2470, 48, 48, .4, 9]];

  var draw = {
    1: function (s) {
      var c = 487, fl = function (a, b) { band(s, a, b, 362, 370); band(s, a, b, 606, 613); };
      [[375, 448], [619, 712], [715, 850], [1130, 1270], [1313, 1426], [1429, 1654], [1770, 1914], [1917, 2054]].forEach(function (p) { fl(p[0], p[1]); });
      wave(s, c, 375, 448, { b: 2, e: [[375, 7], [395, 8], [410, 4], [420, 3], [430, 11], [440, 7], [448, 6]] }, 1);
      wave(s, c, 619, 712, { b: 1, e: [[619, 3], [660, 4], [662, 3], [712, 3]] }, 2);
      wave(s, c, 715, 853, { b: 2, e: shift(ROLL.concat([[82, 6]]), 771), dn: 1.15, s: [[771, 30, 35, .6, 5]] }, 3);
      wave(s, c, 1130, 1270, { b: 1, e: [[1180, 0], [1186, 10], [1196, 4], [1205, 13], [1220, 8], [1258, 9], [1262, 3], [1270, 3]], s: [[1184, 21, 21, .5, 5], [1206, 14, 14, .3, 4]] }, 4);
      wave(s, c, 1313, 1426, { b: 1, e: [[1325, 0], [1335, 7], [1345, 4], [1352, 9], [1362, 4], [1370, 8], [1380, 4], [1390, 8], [1400, 4], [1426, 5]] }, 5);
      wave(s, c, 1429, 1654, { b: 1, e: [[1429, 3], [1654, 4]] }, 6);
      wave(s, c, 1770, 1914, { b: 1.5, e: [[1775, 2], [1800, 6], [1815, 8], [1825, 14], [1840, 8], [1860, 4], [1914, 5]], s: [[1824, 26, 26, .4, 6], [1812, 15, 15, .3, 4]] }, 7);
      wave(s, c, 1917, 2054, { b: 1, e: [[1917, 4], [2054, 4]] }, 8);
    },
    2: function (s) {
      [[716, 850], [855, 992], [996, 1068], [1072, 1155], [1160, 1248], [1273, 1308], [1316, 1426], [1658, 1767], [1830, 1914], [2058, 2316]].forEach(function (p) {
        band(s, p[0], p[1], 662, 670); band(s, p[0], p[1], 926, 934);
        band(s, p[0], p[1], 934, 943); band(s, p[0], p[1], 1206, 1214);
      });
      [[797, 0], [1075, 1]].forEach(function (ch) {
        var c = ch[1] ? 1075 : 797, k = ch[0] * 10, b2 = ch[1] ? 1.5 : 1;
        wave(s, c, 452, 616, { b: 1, e: ch[1] ? [[470, 0], [490, 9], [505, 20], [525, 22], [538, 40], [555, 38], [570, 18], [582, 12], [590, 2]] : [[470, 0], [490, 12], [505, 20], [520, 30], [535, 36], [550, 30], [565, 18], [580, 14], [590, 1]], s: ch[1] ? [[530, 44, 48, .7, 8]] : [[541, 44, 42, .6, 6], [525, 35, 47, .6, 4], [534, 40, 47, .6, 4]] }, k + 1);
        wave(s, c, 716, 850, { b: 1, s: WALK }, k + 2);
        wave(s, c, 855, 992, { b: b2, e: [[918, 0], [925, 4], [940, 6], [950, 7], [955, 4], [960, 0]], s: [[871, 43, 32, .3, 5], [856, 10, 10, .6, 2], [887, 5, 5, .6, 2], [913, 13, 13, .2, 2], [956, 23, 19, .2, 2]] }, k + 3);
        wave(s, c, 996, 1068, { b: b2, s: [[1000, 13, 13, .3, 3], [1040, 11, 11, .5, 2]] }, k + 4);
        wave(s, c, 1072, 1155, { b: b2, e: [[1075, 0], [1085, 3], [1115, 5], [1130, 2], [1136, 5], [1140, 0]], s: [[1077, 5, 5, .5, 2], [1094, 20, 15, .3, 3], [1111, 28, 29, .2, 3], [1118, 15, 10, .3, 3]] }, k + 5);
        wave(s, c, 1160, 1252, { b: b2, e: [[1190, 0], [1198, 5], [1208, 1], [1210, 0]], s: [[1176, 16, 15, .3, 3], [1189, 25, 27, .2, 3]] }, k + 6);
        wave(s, c, 1273, 1308, { b: 1, s: [[1274, ch[1] ? 44 : 45, ch[1] ? 30 : 38, 1, 2]] }, k + 7);
        wave(s, c, 1316, 1426, { b: 3, e: shift(ROLL, 1372), dn: 1.15, s: [[1372, 31, 36, .6, 5]] }, k + 8);
        wave(s, c, 1658, 1769, { b: 1, e: shift(ROLL.slice(0, 9).concat([[50, 3], [55, 1]]), 1714), dn: 1.15, s: [[1714, 31, 36, .6, 5]] }, k + 9);
        wave(s, c, 1830, 1917, { b: b2, e: [[1834, 4], [1860, 5], [1880, 3], [1895, 4], [1896, 0]], s: [[1836, 7, 7, .5, 2], [1852, 16, 15, .5, 3], [1869, 29, 29, .2, 3], [1873, 11, 11, .3, 2], [1894, 4, 5, .8, 1]] }, k + 10);
        wave(s, c, 2058, 2316, { b: 1, e: ch[1] ? [[2058, 4], [2125, 6], [2160, 14], [2220, 18], [2255, 22], [2290, 15], [2314, 1], [2316, 0]] : [[2058, 0], [2090, 2], [2180, 5], [2200, 7], [2256, 9], [2300, 4], [2312, 1]] }, k + 11);
        wave(s, c, 2320, 2526, { b: 1, s: STEPS }, k + 12);
        wave(s, c, 2530, 2772, { b: 1, s: shiftS(STEPS, 208).concat([[2740, 20, 20, .6, 3], [2753, 16, 16, .6, 2], [2764, 12, 12, .7, 2]]) }, k + 13);
      });
      // clip gain envelopes
      fade(s, 452, 616, 496, 580, 698, 729, 898, 869);
      [[496, 698], [580, 729], [496, 898], [580, 869]].forEach(function (p) { dot(s, p[0], p[1], true); });
      dot(s, 496, 764); dot(s, 496, 832);
      fade(s, 452, 616, 496, 580, 973, 1006, 1177, 1144);
      [[496, 973], [580, 1006], [496, 1177], [580, 1144]].forEach(function (p) { dot(s, p[0], p[1], true); });
      dot(s, 496, 1040); dot(s, 496, 1110);
      fade(s, 2320, 2526, 2355, 2526, 669, 740, 925, 856);
      dot(s, 2355, 669, true); dot(s, 2355, 928, true); dot(s, 2355, 737); dot(s, 2355, 860);
      fade(s, 2530, 2776, 2566, 2744, 669, 741, 925, 854);
      dot(s, 2566, 669, true); dot(s, 2566, 928, true); dot(s, 2566, 737); dot(s, 2566, 860); dot(s, 2744, 741, true); dot(s, 2744, 857, true);
      fade(s, 2320, 2526, 2355, 2526, 944, 1015, 1205, 1134);
      dot(s, 2355, 943, true); dot(s, 2355, 1209, true); dot(s, 2355, 1013); dot(s, 2355, 1139);
      fade(s, 2530, 2776, 2566, 2744, 944, 1017, 1205, 1132);
      dot(s, 2566, 943, true); dot(s, 2566, 1209, true); dot(s, 2566, 1013); dot(s, 2566, 1139); dot(s, 2744, 1017, true); dot(s, 2744, 1135, true);
    },
    3: function (s) {
      var c = 1397;
      [[1318, 1408], [1658, 1746]].forEach(function (p, i) {
        band(s, p[0], p[1], 1262, 1270); band(s, p[0], p[1], 1526, 1534); band(s, p[0], p[1], 1536, 1544);
        var dx = i ? 340 : 0;
        wave(s, c, p[0], p[1] + (i ? 3 : 0), { b: 1, s: [[1328 + dx, 27, 31, .5, 3], [1351 + dx, 55, 67, .55, 3], [1371 + dx, 51, 61, .55, 3], [1393 + dx, 55, 57, .5, 3]] }, 20 + i);
      });
      wave(s, c, 2320, 2482, { b: 1, e: [[2330, 0], [2338, 5], [2380, 6], [2395, 15], [2412, 30], [2435, 18], [2450, 9], [2482, 8]], s: [[2412, 43, 51, .7, 5], [2425, 30, 30, .6, 4]] }, 23);
      wave(s, c, 2487, 2616, { b: 1, e: [[2487, 6], [2520, 8], [2530, 18], [2543, 30], [2565, 18], [2580, 9], [2616, 8]], s: [[2543, 44, 51, .7, 5], [2556, 30, 28, .6, 4]] }, 24);
      wave(s, c, 2622, 2726, { b: 1, e: [[2622, 7], [2635, 11], [2652, 30], [2675, 18], [2690, 8], [2715, 3], [2722, 1], [2724, 0]], s: [[2652, 44, 51, .7, 5], [2665, 28, 28, .6, 4]] }, 25);
      fade(s, 2320, 2482, 2345, 2459, 1268, 1345, 1529, 1450);
      dot(s, 2345, 1267, true); dot(s, 2459, 1345, true); dot(s, 2459, 1453, true); dot(s, 2345, 1531, true); dot(s, 2345, 1335); dot(s, 2345, 1463);
      fade(s, 2487, 2616, 2487, 2590, 1283, 1345, 1515, 1450);
      dot(s, 2489, 1279, true); dot(s, 2489, 1347, true); dot(s, 2489, 1451, true); dot(s, 2489, 1519, true); dot(s, 2590, 1345, true); dot(s, 2590, 1453, true);
      fade(s, 2622, 2722, 2622, 2696, 1305, 1345, 1490, 1450);
      [1279, 1301, 1347, 1369, 1429, 1451, 1497, 1519].forEach(function (y) { dot(s, 2623, y, true); });
      dot(s, 2696, 1345, true); dot(s, 2696, 1453, true);
      // second channel, cut off by the viewport
      fade(s, 2320, 2482, 2345, 2459, 1541, 1618, null, null);
      dot(s, 2345, 1541, true);
      fade(s, 2487, 2616, 2487, 2590, 1557, 1619, null, null);
      dot(s, 2489, 1553, true);
      fade(s, 2622, 2722, 2622, 2696, 1578, 1618, null, null);
      dot(s, 2623, 1553, true); dot(s, 2623, 1575, true);
    }
  };

  document.querySelectorAll('[data-track]').forEach(function (track) {
    var id = track.getAttribute('data-track');
    var svg = track.querySelector('.waves');
    var canvas = track.querySelector('.canvas');
    var box = canvas.getBoundingClientRect();
    svg.setAttribute('width', box.width);
    svg.setAttribute('height', box.height);
    svg.setAttribute('viewBox', CANVAS_X + ' ' + box.top + ' ' + box.width + ' ' + box.height);
    draw[id](svg);
  });
})();
```
